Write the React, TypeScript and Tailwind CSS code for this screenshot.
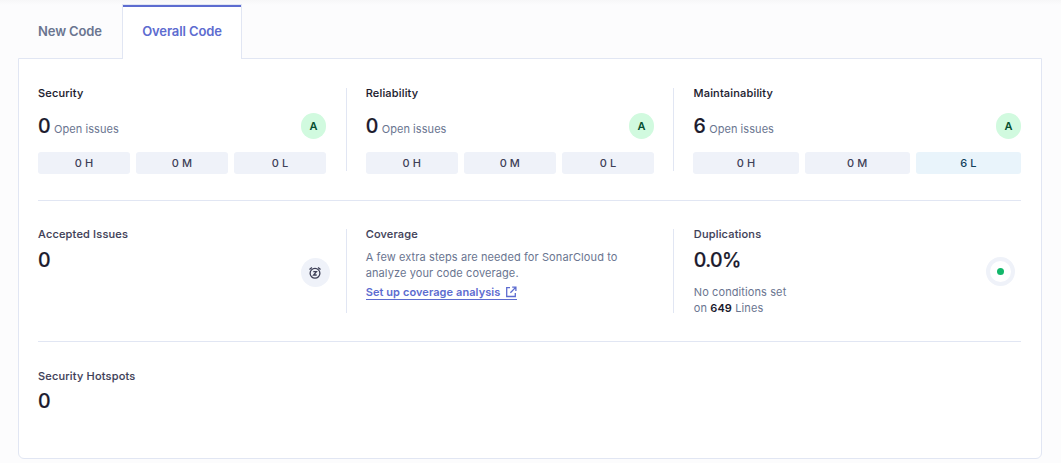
import type { ReactNode } from 'react';

type Level = { label: string; active?: boolean };

const EMPTY_LEVELS: Level[] = [{ label: '0 H' }, { label: '0 M' }, { label: '0 L' }];

function Title({ children, strong }: { children: ReactNode; strong?: boolean }) {
  return (
    <h3
      className={`text-[11px] leading-4 font-medium tracking-[0.18px] [-webkit-text-stroke:0.1px] ${strong ? 'text-[#1b1a2d]' : 'text-[#3e4057]'}`}
    >
      {children}
    </h3>
  );
}

function Figure({ children }: { children: ReactNode }) {
  return (
    <span className="text-[19.5px] leading-6 font-medium tracking-[-0.6px] text-[#1b1a2d] [-webkit-text-stroke:0.2px]">
      {children}
    </span>
  );
}

function IssueCard({ title, count, levels }: { title: string; count: number; levels: Level[] }) {
  return (
    <div className="-mt-[3px] flex flex-col">
      <Title strong>{title}</Title>
      <div className="mt-[12px] flex h-[26px] items-center justify-between">
        <div className="flex items-baseline gap-1">
          <Figure>{count}</Figure>
          <span className="text-[11px] leading-4 tracking-[0.06px] text-[#6a7590]">Open issues</span>
        </div>
        <span className="flex h-[26px] w-[25px] items-center justify-center rounded-full bg-[#d1fadf] text-[11px] font-semibold text-[#054f31]">
          A
        </span>
      </div>
      <div className="mt-[13px] grid grid-cols-3 gap-[6px]">
        {levels.map((level) => (
          <span
            key={level.label}
            className={`flex h-[22px] items-center justify-center rounded-[3px] text-[11px] font-medium tracking-[0.1px] ${level.active ? 'bg-[#e9f4fb] text-[#12415c]' : 'bg-[#eff2f9] text-[#3e4057]'}`}
          >
            {level.label}
          </span>
        ))}
      </div>
    </div>
  );
}

function SnoozeIcon() {
  return (
    <svg className="mr-px" width="12" height="12" viewBox="0 0 12 12" fill="none" stroke="#3e4057" strokeWidth="1.3">
      <circle cx="6" cy="6.3" r="4.9" />
      <path d="M0.5 2.5 2.9 0.5M11.5 2.5 9.1 0.5" />
      <path d="M4.3 4.7h3.1L4.6 8h3.1" />
    </svg>
  );
}

function OpenIcon() {
  return (
    <svg width="12" height="12" viewBox="0 0 12 12" fill="none" stroke="#5d6cd0" strokeWidth="1.3">
      <path d="M5 1.7H1.7v8.8h8.6V7M7.2 1.2h3.7V5M10.7 1.4 5.4 6.7" />
    </svg>
  );
}

export default function App() {
  return (
    <main className="flex h-[463px] w-[1061px] flex-col bg-[#fcfcfd] bg-[linear-gradient(#f7f7f8,#fcfcfd_5px)] px-[18px] pt-1 font-['Inter',sans-serif]">
      <nav className="z-10 flex h-[55px] shrink-0 text-[13px] font-semibold tracking-[-0.12px]">
        <button className="w-[104px] text-[#6a7590]">New Code</button>
        <div className="flex w-[120px] flex-col border-x border-t border-[#e1e6f3] bg-white">
          <button className="flex-1 border-t-2 border-[#5d6cd0] pb-[3px] text-[#5d6cd0]">Overall Code</button>
        </div>
      </nav>
      <section className="-mt-px flex h-[401px] w-[1024px] flex-col rounded-b-[6px] border border-[#e1e6f3] bg-white pr-[20px] pl-[19px]">
        <div className="grid h-[142px] grid-cols-[308px_327px_1fr] border-b border-[#e1e6f3] pt-[29px] pb-[29px]">
          <div className="h-[83px] pr-5">
            <IssueCard title="Security" count={0} levels={EMPTY_LEVELS} />
          </div>
          <div className="h-[83px] border-l border-[#e1e6f3] pr-[19px] pl-[18.66px]">
            <IssueCard title="Reliability" count={0} levels={EMPTY_LEVELS} />
          </div>
          <div className="h-[83px] border-l border-[#e1e6f3] pl-[19.49px]">
            <IssueCard
              title="Maintainability"
              count={6}
              levels={[{ label: '0 H' }, { label: '0 M' }, { label: '6 L', active: true }]}
            />
          </div>
        </div>
        <div className="grid h-[141px] grid-cols-[308px_327px_1fr] border-b border-[#e1e6f3] pt-[28px]">
          <div className="flex h-[84px] justify-between pr-4">
            <div className="-mt-[3px] flex flex-col gap-[6px]">
              <Title>Accepted Issues</Title>
              <Figure>0</Figure>
            </div>
            <span className="mt-[29px] flex size-[29px] items-center justify-center rounded-full bg-[#eff2f9]">
              <SnoozeIcon />
            </span>
          </div>
          <div className="h-[84px] border-l border-[#e1e6f3] pl-[18.66px]">
            <div className="-mt-[3px] flex flex-col items-start">
              <Title>Coverage</Title>
              <p className="mt-[7px] w-[270px] text-[11px] leading-4 tracking-[0.1px] text-[#6a7590]">
                A few extra steps are needed for SonarCloud to analyze your code coverage.
              </p>
              <a className="mt-[4px] flex h-[15px] items-center gap-[5px] border-b border-[#5d6cd0] text-[11px] leading-[14px] font-semibold tracking-[0.08px] text-[#5d6cd0]">
                Set up coverage analysis
                <OpenIcon />
              </a>
            </div>
          </div>
          <div className="flex h-[84px] justify-between border-l border-[#e1e6f3] pr-[6px] pl-[19.8px]">
            <div className="-mt-[3px] flex flex-col">
              <Title>Duplications</Title>
              <div className="mt-[6px] flex">
                <Figure>0.0%</Figure>
              </div>
              <p className="mt-[12px] text-[11px] leading-4 tracking-[0.1px] text-[#6a7590]">
                No conditions set
                <br />
                on <b className="font-semibold text-[#1b1a2d]">649</b> Lines
              </p>
            </div>
            <span className="mt-[28px] flex size-[29px] items-center justify-center rounded-full border-4 border-[#eff2f9]">
              <span className="size-[7px] rounded-full bg-[#12b76a]" />
            </span>
          </div>
        </div>
        <div className="flex flex-col gap-[5px] pt-[26px]">
          <Title>Security Hotspots</Title>
          <Figure>0</Figure>
        </div>
      </section>
    </main>
  );
}
